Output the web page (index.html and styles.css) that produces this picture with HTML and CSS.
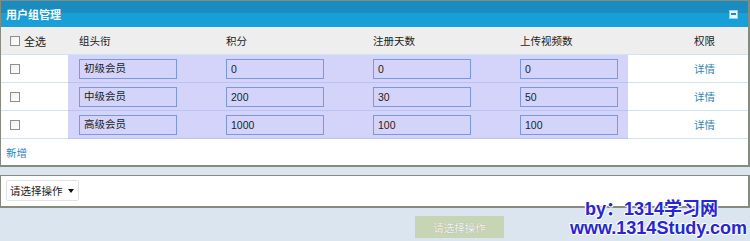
FILE: index.html
```html
<!DOCTYPE html>
<html lang="zh-CN">
<head>
  <meta charset="utf-8">
  <link rel="stylesheet" href="styles.css">
</head>
<body>
  <div class="panel">
    <div class="panel-title">
      <span>用户组管理</span>
      <span class="collapse"></span>
    </div>
    <table class="grid">
      <colgroup>
        <col class="c-chk"><col class="c-wide"><col class="c-wide"><col class="c-wide"><col class="c-last"><col>
      </colgroup>
      <thead>
        <tr>
          <th><label class="all"><input type="checkbox" class="chk"> 全选</label></th>
          <th>组头衔</th>
          <th>积分</th>
          <th>注册天数</th>
          <th>上传视频数</th>
          <th class="perm">权限</th>
        </tr>
      </thead>
      <tbody>
        <tr>
          <td><input type="checkbox" class="chk"></td>
          <td class="hl"><input class="field title" value="初级会员"></td>
          <td class="hl"><input class="field" value="0"></td>
          <td class="hl"><input class="field" value="0"></td>
          <td class="hl"><input class="field" value="0"></td>
          <td class="perm"><a href="#">详情</a></td>
        </tr>
        <tr>
          <td><input type="checkbox" class="chk"></td>
          <td class="hl"><input class="field title" value="中级会员"></td>
          <td class="hl"><input class="field" value="200"></td>
          <td class="hl"><input class="field" value="30"></td>
          <td class="hl"><input class="field" value="50"></td>
          <td class="perm"><a href="#">详情</a></td>
        </tr>
        <tr>
          <td><input type="checkbox" class="chk"></td>
          <td class="hl"><input class="field title" value="高级会员"></td>
          <td class="hl"><input class="field" value="1000"></td>
          <td class="hl"><input class="field" value="100"></td>
          <td class="hl"><input class="field" value="100"></td>
          <td class="perm"><a href="#">详情</a></td>
        </tr>
      </tbody>
    </table>
    <div class="panel-foot"><a href="#">新增</a></div>
  </div>

  <div class="action-bar">
    <div class="select-wrap">
      <select class="action">
        <option>请选择操作</option>
      </select>
    </div>
  </div>

  <div class="submit-row">
    <button type="button" class="submit" disabled>请选择操作</button>
  </div>

  <div class="watermark">
    <div class="wm-by">by：1314学习网</div>
    <div>www.1314Study.com</div>
  </div>
</body>
</html>
```

FILE: styles.css
```css
body {
  margin: 0;
  background: #dae5ef;
  font-family: "Liberation Sans", "Noto Sans CJK SC", sans-serif;
  font-size: 10.5px;
  color: #222;
  position: relative;
  height: 241px;
  overflow: hidden;
}
a {
  color: #1a8abf;
  text-decoration: none;
}

/* main panel */
.panel {
  background: #fff;
  border: 1px solid #858b7d;
  border-right-width: 2px;
  border-bottom-width: 2px;
}
.panel-title {
  height: 26px;
  display: flex;
  align-items: center;
  justify-content: space-between;
  padding: 0 10px 0 5px;
  background: linear-gradient(#1a8cc0 0, #1a8cc0 12px, #17a0d7 12px, #17a0d7 100%);
  color: #fff;
  font-size: 11px;
  font-weight: bold;
}
.collapse {
  width: 9px;
  height: 9px;
  background: #eaf6fc;
  border: 1px solid #8fd0ee;
  position: relative;
  box-sizing: border-box;
}
.collapse::after {
  content: "";
  position: absolute;
  left: 1px;
  right: 1px;
  top: 2px;
  height: 2px;
  background: #1a8cc0;
}

.grid {
  width: 100%;
  border-collapse: collapse;
  table-layout: fixed;
}
.c-chk { width: 67px; }
.c-wide { width: 147px; }
.c-last { width: 119px; }
.grid th {
  height: 27px;
  background: #eeeeee;
  font-weight: normal;
  text-align: left;
  padding: 0 0 0 11px;
  border-bottom: 1px solid #cfe3f2;
}
.grid th:first-child,
.grid td:first-child {
  padding-left: 8px;
}
.grid td {
  height: 27px;
  padding: 0 0 0 11px;
  border-bottom: 1px solid #cfe3f2;
}
.grid .hl {
  background: #d4d4fb;
  border-bottom-color: #bcc3f0;
}
.grid .perm {
  padding-left: 66px;
}
.all {
  display: flex;
  align-items: center;
  gap: 4px;
  font-size: 11px;
}
.chk {
  appearance: none;
  width: 10px;
  height: 10px;
  margin: 0 0 0 1px;
  border: 1px solid #8e8e8e;
  background: linear-gradient(135deg, #f0f0f0, #ffffff);
  display: block;
}
.field {
  width: 98px;
  height: 20px;
  box-sizing: border-box;
  border: 1px solid #7a98e0;
  background: #d4d4fb;
  padding: 0 0 0 4px;
  font-family: "Liberation Sans", "Noto Sans CJK SC", sans-serif;
  font-size: 10.5px;
  color: #222;
  display: block;
}
.field.title {
  padding-bottom: 3px;
}

.panel-foot {
  height: 26px;
  display: flex;
  align-items: center;
  padding-left: 5px;
}

/* action bar */
.action-bar {
  margin-top: 8px;
  background: #fff;
  border: 1px solid #858b7d;
  border-right-width: 2px;
  border-bottom-width: 2px;
  height: 26px;
  padding: 4px 0 0 5px;
  box-sizing: content-box;
}
.select-wrap {
  position: relative;
  width: 73px;
}
.select-wrap::after {
  content: "";
  position: absolute;
  right: 5px;
  top: 9px;
  border-left: 3px solid transparent;
  border-right: 3px solid transparent;
  border-top: 4px solid #111;
}
.action {
  appearance: none;
  width: 73px;
  height: 21px;
  border: 1px solid #e2e2e2;
  border-radius: 2px;
  background: #fff;
  padding: 0 0 0 3px;
  font-family: "Liberation Sans", "Noto Sans CJK SC", sans-serif;
  font-size: 10.5px;
  color: #222;
}

.submit-row {
  padding: 8px 0 0 415px;
}
.submit {
  width: 89px;
  height: 22px;
  border: none;
  background: #c8d5b4;
  color: #f4f4f4;
  font-family: "Liberation Sans", "Noto Sans CJK SC", sans-serif;
  font-size: 10.5px;
  text-shadow: 0 0 1px #9aa08e;
}

/* watermark overlay */
.watermark {
  position: absolute;
  left: 570px;
  top: 200px;
  font-family: "Liberation Sans", "Noto Sans CJK SC", sans-serif;
  font-size: 18px;
  font-weight: bold;
  line-height: 19px;
  color: #2424e4;
  white-space: nowrap;
  text-shadow: 1px 0 0 #fff, -1px 0 0 #fff, 0 1px 0 #fff, 0 -1px 0 #fff, 1px 1px 1px #fff, -1px -1px 1px #fff;
}
.wm-by {
  padding-left: 15px;
}
```
